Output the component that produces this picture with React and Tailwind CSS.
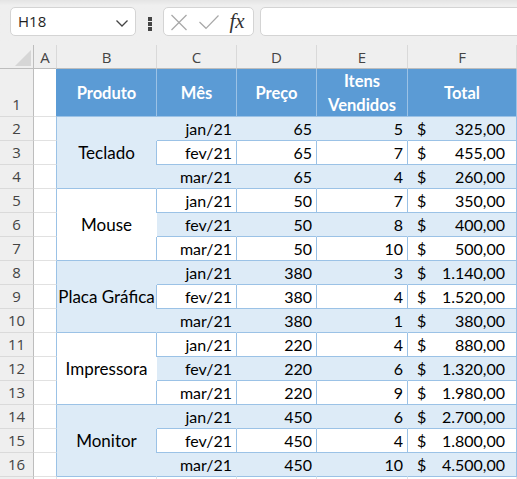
import React from "react";

const groups = [
  ["Teclado", true, [["jan/21", 65, 5, "325,00"], ["fev/21", 65, 7, "455,00"], ["mar/21", 65, 4, "260,00"]]],
  ["Mouse", false, [["jan/21", 50, 7, "350,00"], ["fev/21", 50, 8, "400,00"], ["mar/21", 50, 10, "500,00"]]],
  ["Placa Gráfica", true, [["jan/21", 380, 3, "1.140,00"], ["fev/21", 380, 4, "1.520,00"], ["mar/21", 380, 1, "380,00"]]],
  ["Impressora", false, [["jan/21", 220, 4, "880,00"], ["fev/21", 220, 6, "1.320,00"], ["mar/21", 220, 9, "1.980,00"]]],
  ["Monitor", true, [["jan/21", 450, 6, "2.700,00"], ["fev/21", 450, 4, "1.800,00"], ["mar/21", 450, 10, "4.500,00"]]],
];

const uiFont = { fontFamily: '"Open Sans", "Noto Sans", sans-serif' };
const cellFont = { fontFamily: 'Lato, "Open Sans", sans-serif' };

function RowHead({ n }) {
  return (
    <div
      className="flex items-end justify-center bg-[#efefef] border-r border-b border-r-[#bdbdbd] border-b-[#dadada] text-[15px] leading-[20px] text-[#444] pb-[2px]"
      style={uiFont}
    >
      {n}
    </div>
  );
}

function ACell({ table }) {
  return (
    <div
      className={`bg-white border-b border-b-[#e1e1e1] border-r ${table ? "border-r-[#9bc2e6]" : "border-r-[#e1e1e1]"}`}
    />
  );
}

function DataCell({ light, children, first, last }) {
  return (
    <div
      className={`flex items-end justify-end pr-[4px] pb-[1px] border-r border-b border-b-[#9bc2e6] text-[16px] leading-[21px] text-black ${
        light ? "bg-[#ddebf7]" : "bg-white"
      } ${last || !light ? "border-r-[#9bc2e6]" : "border-r-[#ddebf7]"} ${first && !light ? "shadow-[-1px_0_0_0_#9bc2e6]" : ""}`}
      style={cellFont}
    >
      {children}
    </div>
  );
}

function MoneyCell({ light, value }) {
  return (
    <div
      className={`flex items-end justify-between pl-[9px] pr-[11px] pb-[1px] border-r border-b border-b-[#9bc2e6] border-r-[#9bc2e6] text-[16px] leading-[21px] text-black ${
        light ? "bg-[#ddebf7]" : "bg-white"
      }`}
      style={cellFont}
    >
      <span>$</span>
      <span>{value}</span>
    </div>
  );
}

function HeadCell({ children }) {
  return (
    <div
      className="flex items-center justify-center text-center bg-[#5b9bd5] text-white font-bold text-[16.5px] leading-[24px] border-r border-b border-b-[#9bc2e6] border-r-[#9bc2e6]"
      style={cellFont}
    >
      {children}
    </div>
  );
}

function ColHead({ children }) {
  return (
    <div
      className="flex items-center justify-center bg-[#efefef] border-r border-b border-r-[#d9d9d9] border-b-[#bdbdbd] text-[15px] text-[#444] pt-[1px]"
      style={uiFont}
    >
      {children}
    </div>
  );
}

export default function App() {
  let rowNum = 2;
  const cells = [];
  groups.forEach(([name, light, rows]) => {
    rows.forEach((r, ri) => {
      const n = rowNum++;
      const rowLight = n % 2 === 0;
      cells.push(<RowHead key={`rh${n}`} n={n} />);
      cells.push(<ACell key={`a${n}`} table />);
      if (ri === 0) {
        cells.push(
          <div
            key={`b${n}`}
            className={`row-span-3 flex items-center justify-center border-r border-b border-b-[#9bc2e6] text-[17px] text-black ${
              light ? "bg-[#ddebf7] border-r-[#ddebf7]" : "bg-white border-r-white"
            }`}
            style={cellFont}
          >
            {name}
          </div>
        );
      }
      cells.push(<DataCell key={`c${n}`} light={rowLight} first>{r[0]}</DataCell>);
      cells.push(<DataCell key={`d${n}`} light={rowLight}>{r[1]}</DataCell>);
      cells.push(<DataCell key={`e${n}`} light={rowLight}>{r[2]}</DataCell>);
      cells.push(<MoneyCell key={`f${n}`} light={rowLight} value={r[3]} />);
    });
  });

  return (
    <div className="w-[517px] h-[479px] overflow-hidden bg-[#efefef] relative">
      {/* Toolbar */}
      <div className="h-[45px] relative flex items-start pt-[7px] pl-[10px] bg-gradient-to-b from-[#e4e4e4] via-[#efefef] via-[12%] to-[#efefef]">
        <div
          className="shrink-0 w-[126px] h-[29px] bg-white border border-[#d4d4d4] rounded-[5px] flex items-center justify-between pl-[7px] pr-[6px] text-[15px] text-[#1f1f1f]"
          style={uiFont}
        >
          <span>H18</span>
          <svg width="14" height="10" viewBox="0 0 14 10" className="mt-[2px]">
            <polyline points="1.5,2.5 7,8 12.5,2.5" fill="none" stroke="#444" strokeWidth="1.3" />
          </svg>
        </div>
        <div className="shrink-0 ml-[12px] mt-[10px] flex flex-col gap-[1.5px]">
          <div className="w-[3.5px] h-[3.5px] bg-[#444]" />
          <div className="w-[3.5px] h-[3.5px] bg-[#444]" />
          <div className="w-[3.5px] h-[3.5px] bg-[#444]" />
        </div>
        <div className="shrink-0 ml-[11px] w-[91px] h-[29px] bg-white border border-[#d4d4d4] rounded-[5px] relative">
          <svg width="91" height="29" viewBox="0 0 91 29" className="absolute left-[-1px] top-[-1px]">
            <line x1="8.5" y1="8" x2="23.5" y2="23" stroke="#a8a8a8" strokeWidth="1.2" />
            <line x1="23.5" y1="8" x2="8.5" y2="23" stroke="#a8a8a8" strokeWidth="1.2" />
            <polyline points="36.5,15 43,21.3 55.5,8.5" fill="none" stroke="#a8a8a8" strokeWidth="1.2" />
          </svg>
          <span
            className="absolute left-[66px] top-[0px] text-[21px] leading-[26px] italic text-[#333]"
            style={{ fontFamily: '"Liberation Serif", "DejaVu Serif", serif' }}
          >
            fx
          </span>
        </div>
        <div className="shrink-0 ml-[6px] w-[300px] h-[29px] bg-white border border-[#d4d4d4] rounded-[5px]" />
      </div>

      {/* Sheet */}
      <div className="grid grid-cols-[34px_23px_100px_80px_80px_91px_109px] grid-rows-[24px_48px_repeat(15,24px)_24px]">
        {/* Column header row */}
        <div className="relative bg-[#efefef] border-r border-b border-r-[#bdbdbd] border-b-[#bdbdbd]">
          <svg width="16" height="16" viewBox="0 0 16 16" className="absolute left-[15px] top-[5px]">
            <polygon points="16,0 16,16 0,16" fill="#d6d6d6" />
          </svg>
        </div>
        <ColHead>A</ColHead>
        <ColHead>B</ColHead>
        <ColHead>C</ColHead>
        <ColHead>D</ColHead>
        <ColHead>E</ColHead>
        <ColHead>F</ColHead>

        {/* Row 1 */}
        <RowHead n={1} />
        <div className="bg-white border-b border-b-[#e1e1e1] border-r border-r-[#5b9bd5]" />
        <HeadCell>Produto</HeadCell>
        <HeadCell>Mês</HeadCell>
        <HeadCell>Preço</HeadCell>
        <HeadCell>
          Itens
          <br />
          Vendidos
        </HeadCell>
        <HeadCell>Total</HeadCell>

        {cells}

        {/* Row 17 partial */}
        <div className="bg-[#efefef] border-r border-b border-r-[#bdbdbd] border-b-[#dadada]" />
        <div className="bg-white border-r border-b border-r-[#e1e1e1] border-b-[#e1e1e1]" />
        <div className="bg-white border-r border-b border-r-[#e1e1e1] border-b-[#e1e1e1]" />
        <div className="bg-white border-r border-b border-r-[#e1e1e1] border-b-[#e1e1e1]" />
        <div className="bg-white border-r border-b border-r-[#e1e1e1] border-b-[#e1e1e1]" />
        <div className="bg-white border-r border-b border-r-[#e1e1e1] border-b-[#e1e1e1]" />
        <div className="bg-white border-r border-b border-r-[#e1e1e1] border-b-[#e1e1e1]" />
      </div>
    </div>
  );
}
